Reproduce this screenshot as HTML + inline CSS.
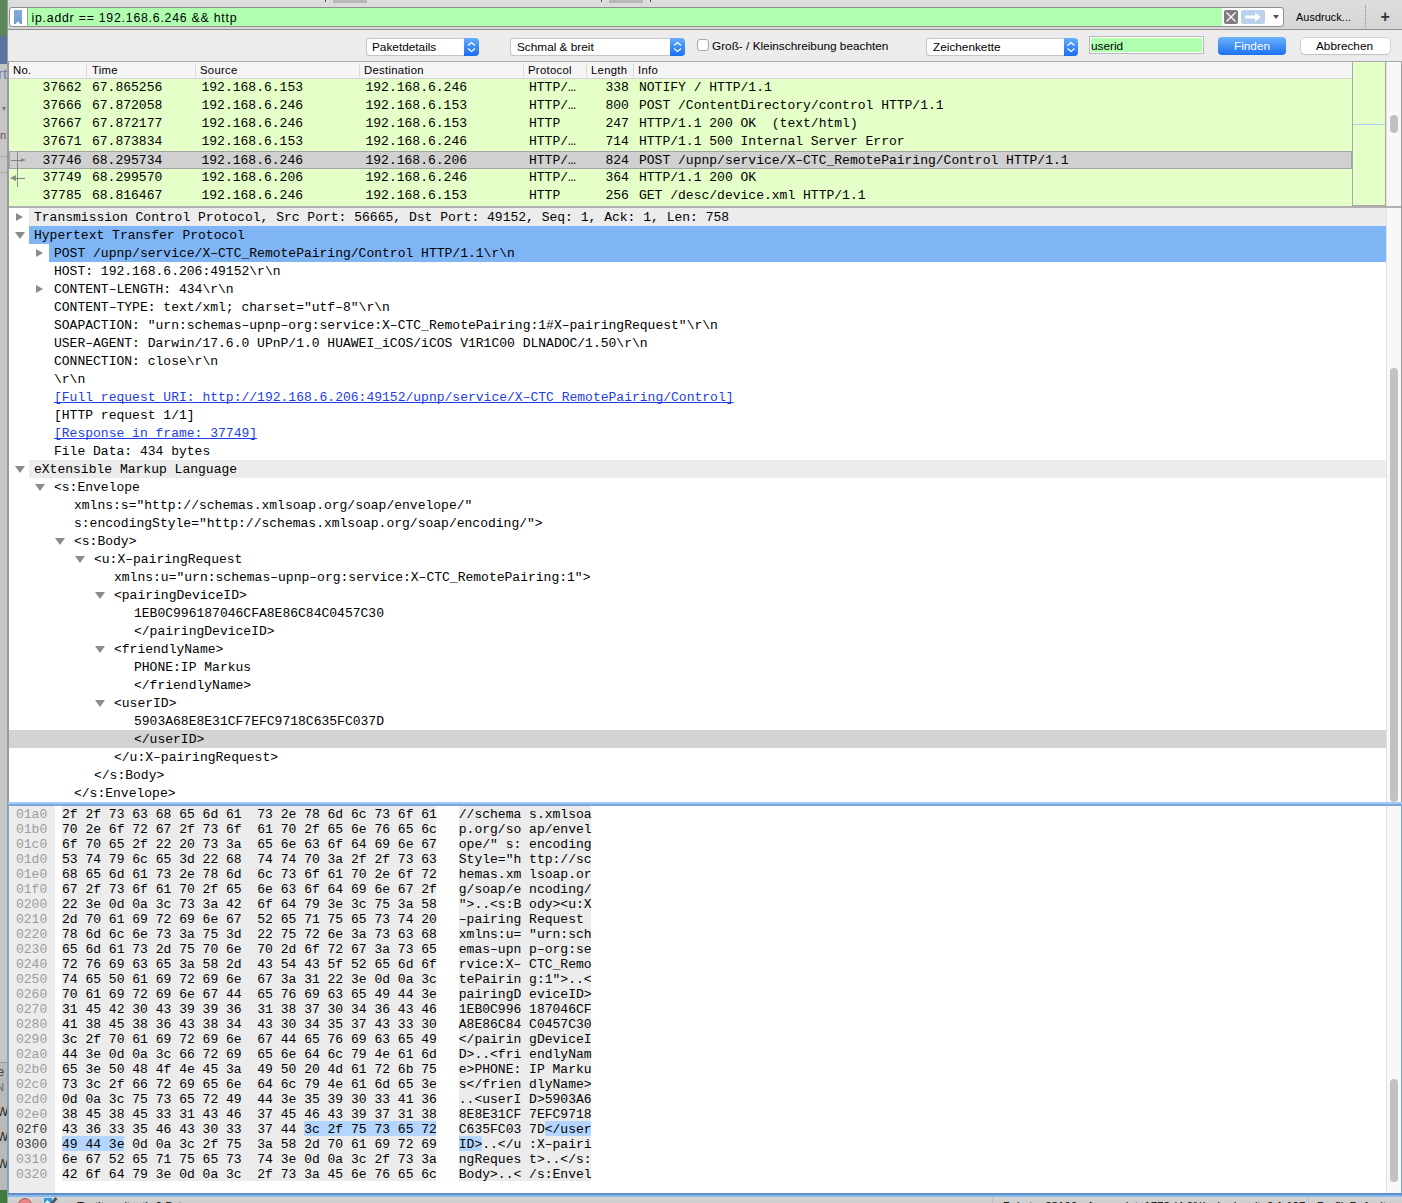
<!DOCTYPE html><html><head><meta charset="utf-8"><style>
html,body{margin:0;padding:0}
body{width:1402px;height:1203px;position:relative;overflow:hidden;background:#bdbdbd;font-family:"Liberation Sans", sans-serif}
div,span{box-sizing:border-box}
.a{position:absolute}
.m{font-family:"Liberation Mono", monospace;font-size:13.02px;white-space:pre;color:#000}
.s{font-family:"Liberation Sans", sans-serif;white-space:pre;color:#000}
.tri{position:absolute;width:0;height:0}
</style></head><body>

<div class="a" style="left:0;top:0;width:8px;height:36px;background:#5a885a"></div>
<div class="a" style="left:0;top:36px;width:8px;height:28px;background:#5a739f"></div>
<div class="a" style="left:0;top:64px;width:8px;height:1128px;background:#c6c6c6"></div>
<div class="a" style="left:0;top:1062px;width:8px;height:130px;background:#b9b9b9"></div>
<div class="a" style="left:0;top:156px;width:7px;height:1px;background:#a9a9a9"></div>
<div class="a" style="left:0;top:172px;width:7px;height:1px;background:#a9a9a9"></div>
<div class="a" style="left:0;top:1062px;width:8px;height:1px;background:#9a9a9a"></div>
<div class="a" style="left:0;top:64px;width:7px;height:1128px;overflow:hidden"><div class="a s" style="left:-2px;top:1px;font-size:15px;line-height:18px;color:#6a7fa3">rt</div><div class="tri" style="left:2px;top:43px;border-left:2.5px solid transparent;border-right:2.5px solid transparent;border-top:4px solid #7a7a7a"></div><div class="a s" style="left:0px;top:62px;font-size:11px;line-height:18px;color:#555">n</div><div class="a s" style="left:-3px;top:1000px;font-size:13px;line-height:16px;color:#444">e</div><div class="a s" style="left:-4px;top:1016px;font-size:11px;line-height:14px;color:#5a6b8a">N</div><div class="a s" style="left:-3px;top:1041px;font-size:12px;line-height:14px;color:#222">W</div><div class="a s" style="left:-3px;top:1066px;font-size:12px;line-height:14px;color:#222">W</div><div class="a s" style="left:-3px;top:1093px;font-size:12px;line-height:14px;color:#222">W</div></div>
<div class="a" style="left:0;top:1190px;width:8px;height:13px;background:#3f7a3f"></div>
<div class="a" style="left:7px;top:0;width:2px;height:1203px;background:#9a9a9a"></div>
<div class="a" style="left:8px;top:0;width:1394px;height:29px;background:linear-gradient(#dddddd,#d6d6d6)"></div>
<div class="a" style="left:8px;top:29px;width:1394px;height:1px;background:#8f8f8f"></div>
<div class="a" style="left:333px;top:0;width:34px;height:3px;background:#b8b8b8"></div>
<div class="a" style="left:609px;top:0;width:34px;height:3px;background:#b8b8b8"></div>
<div class="a" style="left:325px;top:0;width:1px;height:2px;background:#555"></div>
<div class="a" style="left:601px;top:0;width:1px;height:2px;background:#555"></div>
<div class="a" style="left:650px;top:0;width:1px;height:2px;background:#555"></div>
<div class="a" style="left:9px;top:7px;width:1275px;height:20px;border:1px solid #8e8e8e;border-radius:3px;background:#fff;overflow:hidden"><div class="a" style="left:18px;top:0;width:1194px;height:18px;background:#afffaf"></div></div>
<div class="a" style="left:14px;top:10px;width:8px;height:14px;background:linear-gradient(#84aed9,#6e9dd0);clip-path:polygon(0 0,100% 0,100% 100%,77% 100%,50% 79%,22% 100%,0 100%)"></div>
<div class="a" style="left:27px;top:8px;width:1px;height:18px;background:#a0a0a0"></div>
<div class="a s" style="left:31.5px;top:9px;font-size:12.3px;letter-spacing:0.77px;line-height:18px">ip.addr == 192.168.6.246 &amp;&amp; http</div>
<div class="a" style="left:1224px;top:10px;width:14px;height:14px;background:#7d7d7d;border-radius:2px"></div>
<svg class="a" style="left:1224px;top:10px" width="14" height="14"><path d="M2.5 2.5L11.5 11.5M11.5 2.5L2.5 11.5" stroke="#fff" stroke-width="1.3"/></svg>
<div class="a" style="left:1241px;top:10px;width:24px;height:14px;background:#bcd2ec;border-radius:2px"></div>
<svg class="a" style="left:1241px;top:10px" width="24" height="14"><path d="M4 5.5H14V2.5L20 7L14 11.5V8.5H4Z" fill="#fff"/></svg>
<div class="tri" style="left:1272.5px;top:15px;border-left:3.5px solid transparent;border-right:3.5px solid transparent;border-top:4px solid #555"></div>
<div class="a s" style="left:1296px;top:9px;font-size:10.8px;letter-spacing:0.1px;line-height:16px">Ausdruck...</div>
<div class="a" style="left:1365px;top:5px;width:1px;height:23px;border-left:1px dotted #888"></div>
<div class="a s" style="left:1380.5px;top:7.5px;font-size:16px;font-weight:bold;line-height:18px;color:#333">+</div>
<div class="a" style="left:8px;top:30px;width:1394px;height:31px;background:#ececec"></div>
<div class="a" style="left:8px;top:61px;width:1394px;height:1px;background:#a8a8a8"></div>
<div class="a" style="left:366px;top:38px;width:113px;height:18px;border-radius:4px;background:#fff;box-shadow:inset 0 0 0 1px #c6c6c6,inset 0 -1px 0 #b4b4b4"></div>
<div class="a" style="left:464px;top:38px;width:15px;height:18px;border-radius:0 4px 4px 0;background:linear-gradient(#6aaefb,#3b8cf8 50%,#1a6ff5)"></div>
<svg class="a" style="left:464px;top:38px" width="15" height="18"><path d="M4.0 7.5L7.5 4.5L11.0 7.5M4.0 10.5L7.5 13.5L11.0 10.5" stroke="#fff" stroke-width="1.3" fill="none"/></svg>
<div class="a s" style="left:372px;top:39px;font-size:11.8px;line-height:16px">Paketdetails</div>
<div class="a" style="left:510px;top:38px;width:175px;height:18px;border-radius:4px;background:#fff;box-shadow:inset 0 0 0 1px #c6c6c6,inset 0 -1px 0 #b4b4b4"></div>
<div class="a" style="left:670px;top:38px;width:15px;height:18px;border-radius:0 4px 4px 0;background:linear-gradient(#6aaefb,#3b8cf8 50%,#1a6ff5)"></div>
<svg class="a" style="left:670px;top:38px" width="15" height="18"><path d="M4.0 7.5L7.5 4.5L11.0 7.5M4.0 10.5L7.5 13.5L11.0 10.5" stroke="#fff" stroke-width="1.3" fill="none"/></svg>
<div class="a s" style="left:517px;top:39px;font-size:11.8px;line-height:16px">Schmal &amp; breit</div>
<div class="a" style="left:926px;top:38px;width:152px;height:18px;border-radius:4px;background:#fff;box-shadow:inset 0 0 0 1px #c6c6c6,inset 0 -1px 0 #b4b4b4"></div>
<div class="a" style="left:1064px;top:38px;width:14px;height:18px;border-radius:0 4px 4px 0;background:linear-gradient(#6aaefb,#3b8cf8 50%,#1a6ff5)"></div>
<svg class="a" style="left:1064px;top:38px" width="14" height="18"><path d="M3.5 7.5L7.0 4.5L10.5 7.5M3.5 10.5L7.0 13.5L10.5 10.5" stroke="#fff" stroke-width="1.3" fill="none"/></svg>
<div class="a s" style="left:933px;top:39px;font-size:11.8px;line-height:16px">Zeichenkette</div>
<div class="a" style="left:697px;top:39px;width:12px;height:12px;border:1px solid #a9a9a9;border-radius:3px;background:#fff"></div>
<div class="a s" style="left:712px;top:38px;font-size:11.8px;line-height:16px">Groß- / Kleinschreibung beachten</div>
<div class="a" style="left:1089px;top:36px;width:115px;height:18px;border:1px solid #b8b8b8;background:#afffaf;box-shadow:inset 0 0 0 1px #fff"></div>
<div class="a s" style="left:1091px;top:38px;font-size:11.8px;line-height:16px">userid</div>
<div class="a" style="left:1218px;top:37px;width:68px;height:18px;border-radius:4px;background:linear-gradient(#6cb3fa,#1b72f5)"></div>
<div class="a s" style="left:1218px;top:38px;width:68px;text-align:center;font-size:11.8px;line-height:16px;color:#fff">Finden</div>
<div class="a" style="left:1300.5px;top:38px;width:89px;height:16px;border-radius:4px;background:#fff;box-shadow:0 0 0 0.5px #b5b5b5,0 1px 1px rgba(0,0,0,0.12)"></div>
<div class="a s" style="left:1300px;top:38px;width:89px;text-align:center;font-size:11.8px;line-height:16px">Abbrechen</div>
<div class="a" style="left:9px;top:62px;width:1343px;height:17px;background:#f5f5f5;border-bottom:1px solid #d4d4d4"></div>
<div class="a s" style="left:13px;top:63px;font-size:11.3px;letter-spacing:0.3px;line-height:14px">No.</div>
<div class="a s" style="left:92px;top:63px;font-size:11.3px;letter-spacing:0.3px;line-height:14px">Time</div>
<div class="a s" style="left:200px;top:63px;font-size:11.3px;letter-spacing:0.3px;line-height:14px">Source</div>
<div class="a s" style="left:364px;top:63px;font-size:11.3px;letter-spacing:0.3px;line-height:14px">Destination</div>
<div class="a s" style="left:528px;top:63px;font-size:11.3px;letter-spacing:0.3px;line-height:14px">Protocol</div>
<div class="a s" style="left:591px;top:63px;font-size:11.3px;letter-spacing:0.3px;line-height:14px">Length</div>
<div class="a s" style="left:638px;top:63px;font-size:11.3px;letter-spacing:0.3px;line-height:14px">Info</div>
<div class="a" style="left:86px;top:64px;width:1px;height:13px;background:#dadada"></div>
<div class="a" style="left:195px;top:64px;width:1px;height:13px;background:#dadada"></div>
<div class="a" style="left:359px;top:64px;width:1px;height:13px;background:#dadada"></div>
<div class="a" style="left:523px;top:64px;width:1px;height:13px;background:#dadada"></div>
<div class="a" style="left:586px;top:64px;width:1px;height:13px;background:#dadada"></div>
<div class="a" style="left:633px;top:64px;width:1px;height:13px;background:#dadada"></div>
<div class="a" style="left:9px;top:79px;width:1343px;height:127px;background:#e4ffc7"></div>
<div class="a" style="left:9px;top:151px;width:1343px;height:18px;background:#d0d0d0;border:1px solid #a3a3a3"></div>
<div class="a m" style="left:42.5px;top:80px;line-height:16px">37662</div>
<div class="a m" style="left:92px;top:80px;line-height:16px">67.865256</div>
<div class="a m" style="left:201.5px;top:80px;line-height:16px">192.168.6.153</div>
<div class="a m" style="left:365.5px;top:80px;line-height:16px">192.168.6.246</div>
<div class="a m" style="left:529px;top:80px;line-height:16px">HTTP/…</div>
<div class="a m" style="left:605.5px;top:80px;line-height:16px">338</div>
<div class="a m" style="left:639px;top:80px;line-height:16px">NOTIFY / HTTP/1.1</div>
<div class="a m" style="left:42.5px;top:98px;line-height:16px">37666</div>
<div class="a m" style="left:92px;top:98px;line-height:16px">67.872058</div>
<div class="a m" style="left:201.5px;top:98px;line-height:16px">192.168.6.246</div>
<div class="a m" style="left:365.5px;top:98px;line-height:16px">192.168.6.153</div>
<div class="a m" style="left:529px;top:98px;line-height:16px">HTTP/…</div>
<div class="a m" style="left:605.5px;top:98px;line-height:16px">800</div>
<div class="a m" style="left:639px;top:98px;line-height:16px">POST /ContentDirectory/control HTTP/1.1</div>
<div class="a m" style="left:42.5px;top:116px;line-height:16px">37667</div>
<div class="a m" style="left:92px;top:116px;line-height:16px">67.872177</div>
<div class="a m" style="left:201.5px;top:116px;line-height:16px">192.168.6.246</div>
<div class="a m" style="left:365.5px;top:116px;line-height:16px">192.168.6.153</div>
<div class="a m" style="left:529px;top:116px;line-height:16px">HTTP</div>
<div class="a m" style="left:605.5px;top:116px;line-height:16px">247</div>
<div class="a m" style="left:639px;top:116px;line-height:16px">HTTP/1.1 200 OK  (text/html)</div>
<div class="a m" style="left:42.5px;top:134px;line-height:16px">37671</div>
<div class="a m" style="left:92px;top:134px;line-height:16px">67.873834</div>
<div class="a m" style="left:201.5px;top:134px;line-height:16px">192.168.6.153</div>
<div class="a m" style="left:365.5px;top:134px;line-height:16px">192.168.6.246</div>
<div class="a m" style="left:529px;top:134px;line-height:16px">HTTP/…</div>
<div class="a m" style="left:605.5px;top:134px;line-height:16px">714</div>
<div class="a m" style="left:639px;top:134px;line-height:16px">HTTP/1.1 500 Internal Server Error</div>
<div class="a m" style="left:42.5px;top:153px;line-height:16px">37746</div>
<div class="a m" style="left:92px;top:153px;line-height:16px">68.295734</div>
<div class="a m" style="left:201.5px;top:153px;line-height:16px">192.168.6.246</div>
<div class="a m" style="left:365.5px;top:153px;line-height:16px">192.168.6.206</div>
<div class="a m" style="left:529px;top:153px;line-height:16px">HTTP/…</div>
<div class="a m" style="left:605.5px;top:153px;line-height:16px">824</div>
<div class="a m" style="left:639px;top:153px;line-height:16px">POST /upnp/service/X–CTC_RemotePairing/Control HTTP/1.1</div>
<div class="a m" style="left:42.5px;top:170px;line-height:16px">37749</div>
<div class="a m" style="left:92px;top:170px;line-height:16px">68.299570</div>
<div class="a m" style="left:201.5px;top:170px;line-height:16px">192.168.6.206</div>
<div class="a m" style="left:365.5px;top:170px;line-height:16px">192.168.6.246</div>
<div class="a m" style="left:529px;top:170px;line-height:16px">HTTP/…</div>
<div class="a m" style="left:605.5px;top:170px;line-height:16px">364</div>
<div class="a m" style="left:639px;top:170px;line-height:16px">HTTP/1.1 200 OK</div>
<div class="a m" style="left:42.5px;top:188px;line-height:16px">37785</div>
<div class="a m" style="left:92px;top:188px;line-height:16px">68.816467</div>
<div class="a m" style="left:201.5px;top:188px;line-height:16px">192.168.6.246</div>
<div class="a m" style="left:365.5px;top:188px;line-height:16px">192.168.6.153</div>
<div class="a m" style="left:529px;top:188px;line-height:16px">HTTP</div>
<div class="a m" style="left:605.5px;top:188px;line-height:16px">256</div>
<div class="a m" style="left:639px;top:188px;line-height:16px">GET /desc/device.xml HTTP/1.1</div>
<div class="a" style="left:17px;top:151px;width:1px;height:36px;background:#808a8a"></div>
<div class="a" style="left:11px;top:160px;width:10px;height:1px;background:#808080"></div>
<div class="tri" style="left:21px;top:158px;border-top:2.5px solid transparent;border-bottom:2.5px solid transparent;border-left:5px solid #8a8a8a"></div>
<div class="a" style="left:15px;top:178px;width:10px;height:1px;background:#808080"></div>
<div class="tri" style="left:10px;top:175px;border-top:3.5px solid transparent;border-bottom:3.5px solid transparent;border-right:6px solid #8a8a8a"></div>
<div class="a" style="left:1352px;top:62px;width:34px;height:144px;background:#e4ffc7;border:1px solid #a8a8a8;border-top:none"></div>
<div class="a" style="left:1353px;top:124px;width:32px;height:1px;background:#a9d4f5"></div>
<div class="a" style="left:1386px;top:62px;width:15px;height:144px;background:#f8f8f8;border-left:1px solid #e2e2e2"></div>
<div class="a" style="left:1390px;top:115px;width:8px;height:18px;background:#c2c2c2;border-radius:4px"></div>
<div class="a" style="left:9px;top:206px;width:1393px;height:2px;background:#b0b0b0"></div>
<div class="a" style="left:9px;top:208px;width:1377px;height:594px;background:#fff"></div>
<div class="a" style="left:1386px;top:208px;width:15px;height:594px;background:#f8f8f8;border-left:1px solid #e2e2e2"></div>
<div class="a" style="left:1390px;top:368px;width:8px;height:434px;background:#c2c2c2;border-radius:4px"></div>
<div class="a" style="left:1401px;top:62px;width:1px;height:1141px;background:#a0a0a0"></div>
<div class="a" style="left:29px;top:208px;width:1357px;height:18px;background:#ececec"></div>
<div class="tri" style="left:16px;top:213px;border-top:4.5px solid transparent;border-bottom:4.5px solid transparent;border-left:7.8px solid #8b8b8b"></div>
<div class="a m" style="left:34px;top:209px;line-height:17px;">Transmission Control Protocol, Src Port: 56665, Dst Port: 49152, Seq: 1, Ack: 1, Len: 758</div>
<div class="a" style="left:29px;top:226px;width:1357px;height:18px;background:#80b5f5"></div>
<div class="tri" style="left:15px;top:232px;border-left:5px solid transparent;border-right:5px solid transparent;border-top:7.5px solid #8b8b8b"></div>
<div class="a m" style="left:34px;top:227px;line-height:17px;">Hypertext Transfer Protocol</div>
<div class="a" style="left:49px;top:244px;width:1337px;height:18px;background:#80b5f5"></div>
<div class="tri" style="left:36px;top:249px;border-top:4.5px solid transparent;border-bottom:4.5px solid transparent;border-left:7.8px solid #8b8b8b"></div>
<div class="a m" style="left:54px;top:245px;line-height:17px;">POST /upnp/service/X–CTC_RemotePairing/Control HTTP/1.1\r\n</div>
<div class="a m" style="left:54px;top:263px;line-height:17px;">HOST: 192.168.6.206:49152\r\n</div>
<div class="tri" style="left:36px;top:285px;border-top:4.5px solid transparent;border-bottom:4.5px solid transparent;border-left:7.8px solid #8b8b8b"></div>
<div class="a m" style="left:54px;top:281px;line-height:17px;">CONTENT–LENGTH: 434\r\n</div>
<div class="a m" style="left:54px;top:299px;line-height:17px;">CONTENT–TYPE: text/xml; charset="utf–8"\r\n</div>
<div class="a m" style="left:54px;top:317px;line-height:17px;">SOAPACTION: "urn:schemas–upnp–org:service:X–CTC_RemotePairing:1#X–pairingRequest"\r\n</div>
<div class="a m" style="left:54px;top:335px;line-height:17px;">USER–AGENT: Darwin/17.6.0 UPnP/1.0 HUAWEI_iCOS/iCOS V1R1C00 DLNADOC/1.50\r\n</div>
<div class="a m" style="left:54px;top:353px;line-height:17px;">CONNECTION: close\r\n</div>
<div class="a m" style="left:54px;top:371px;line-height:17px;">\r\n</div>
<div class="a m" style="left:54px;top:389px;line-height:17px;color:#1d3ee6;text-decoration:underline;text-decoration-skip-ink:none;">[Full request URI: http://192.168.6.206:49152/upnp/service/X–CTC_RemotePairing/Control]</div>
<div class="a m" style="left:54px;top:407px;line-height:17px;">[HTTP request 1/1]</div>
<div class="a m" style="left:54px;top:425px;line-height:17px;color:#1d3ee6;text-decoration:underline;text-decoration-skip-ink:none;">[Response in frame: 37749]</div>
<div class="a m" style="left:54px;top:443px;line-height:17px;">File Data: 434 bytes</div>
<div class="a" style="left:29px;top:460px;width:1357px;height:18px;background:#ececec"></div>
<div class="tri" style="left:15px;top:466px;border-left:5px solid transparent;border-right:5px solid transparent;border-top:7.5px solid #8b8b8b"></div>
<div class="a m" style="left:34px;top:461px;line-height:17px;">eXtensible Markup Language</div>
<div class="tri" style="left:35px;top:484px;border-left:5px solid transparent;border-right:5px solid transparent;border-top:7.5px solid #8b8b8b"></div>
<div class="a m" style="left:54px;top:479px;line-height:17px;">&lt;s:Envelope</div>
<div class="a m" style="left:74px;top:497px;line-height:17px;">xmlns:s="http://schemas.xmlsoap.org/soap/envelope/"</div>
<div class="a m" style="left:74px;top:515px;line-height:17px;">s:encodingStyle="http://schemas.xmlsoap.org/soap/encoding/"&gt;</div>
<div class="tri" style="left:55px;top:538px;border-left:5px solid transparent;border-right:5px solid transparent;border-top:7.5px solid #8b8b8b"></div>
<div class="a m" style="left:74px;top:533px;line-height:17px;">&lt;s:Body&gt;</div>
<div class="tri" style="left:75px;top:556px;border-left:5px solid transparent;border-right:5px solid transparent;border-top:7.5px solid #8b8b8b"></div>
<div class="a m" style="left:94px;top:551px;line-height:17px;">&lt;u:X–pairingRequest</div>
<div class="a m" style="left:114px;top:569px;line-height:17px;">xmlns:u="urn:schemas–upnp–org:service:X–CTC_RemotePairing:1"&gt;</div>
<div class="tri" style="left:95px;top:592px;border-left:5px solid transparent;border-right:5px solid transparent;border-top:7.5px solid #8b8b8b"></div>
<div class="a m" style="left:114px;top:587px;line-height:17px;">&lt;pairingDeviceID&gt;</div>
<div class="a m" style="left:134px;top:605px;line-height:17px;">1EB0C996187046CFA8E86C84C0457C30</div>
<div class="a m" style="left:134px;top:623px;line-height:17px;">&lt;/pairingDeviceID&gt;</div>
<div class="tri" style="left:95px;top:646px;border-left:5px solid transparent;border-right:5px solid transparent;border-top:7.5px solid #8b8b8b"></div>
<div class="a m" style="left:114px;top:641px;line-height:17px;">&lt;friendlyName&gt;</div>
<div class="a m" style="left:134px;top:659px;line-height:17px;">PHONE:IP Markus</div>
<div class="a m" style="left:134px;top:677px;line-height:17px;">&lt;/friendlyName&gt;</div>
<div class="tri" style="left:95px;top:700px;border-left:5px solid transparent;border-right:5px solid transparent;border-top:7.5px solid #8b8b8b"></div>
<div class="a m" style="left:114px;top:695px;line-height:17px;">&lt;userID&gt;</div>
<div class="a m" style="left:134px;top:713px;line-height:17px;">5903A68E8E31CF7EFC9718C635FC037D</div>
<div class="a" style="left:9px;top:730px;width:1377px;height:18px;background:#d3d3d3"></div>
<div class="a m" style="left:134px;top:731px;line-height:17px;">&lt;/userID&gt;</div>
<div class="a m" style="left:114px;top:749px;line-height:17px;">&lt;/u:X–pairingRequest&gt;</div>
<div class="a m" style="left:94px;top:767px;line-height:17px;">&lt;/s:Body&gt;</div>
<div class="a m" style="left:74px;top:785px;line-height:17px;">&lt;/s:Envelope&gt;</div>
<div class="a" style="left:8px;top:802px;width:1394px;height:395px;background:#fff;border:1px solid #7aa7dc;border-top:4px solid #7aa7dc;border-bottom:4px solid #8bb9ec"></div><div class="a" style="left:8px;top:1193px;width:1394px;height:2px;background:#5f8fca"></div><div class="a" style="left:8px;top:802px;width:1394px;height:2px;background:#9fcaf8"></div>
<div class="a" style="left:9px;top:806px;width:46px;height:387px;background:#ececec"></div>
<div class="a" style="left:1386px;top:806px;width:15px;height:387px;background:#f8f8f8;border-left:1px solid #e2e2e2"></div>
<div class="a" style="left:1390px;top:1079px;width:8px;height:103px;background:#c2c2c2;border-radius:4px"></div>
<div class="a" style="left:62px;top:806px;width:374.4px;height:15px;background:#ececec"></div>
<div class="a" style="left:458.8px;top:806px;width:132.6px;height:15px;background:#ececec"></div>
<div class="a m" style="left:16px;top:807px;line-height:15px;color:#9c9c9c">01a0</div>
<div class="a m" style="left:62px;top:807px;line-height:15px">2f 2f 73 63 68 65 6d 61  73 2e 78 6d 6c 73 6f 61</div>
<div class="a m" style="left:458.8px;top:807px;line-height:15px">//schema s.xmlsoa</div>
<div class="a" style="left:62px;top:821px;width:374.4px;height:15px;background:#ececec"></div>
<div class="a" style="left:458.8px;top:821px;width:132.6px;height:15px;background:#ececec"></div>
<div class="a m" style="left:16px;top:822px;line-height:15px;color:#9c9c9c">01b0</div>
<div class="a m" style="left:62px;top:822px;line-height:15px">70 2e 6f 72 67 2f 73 6f  61 70 2f 65 6e 76 65 6c</div>
<div class="a m" style="left:458.8px;top:822px;line-height:15px">p.org/so ap/envel</div>
<div class="a" style="left:62px;top:836px;width:374.4px;height:15px;background:#ececec"></div>
<div class="a" style="left:458.8px;top:836px;width:132.6px;height:15px;background:#ececec"></div>
<div class="a m" style="left:16px;top:837px;line-height:15px;color:#9c9c9c">01c0</div>
<div class="a m" style="left:62px;top:837px;line-height:15px">6f 70 65 2f 22 20 73 3a  65 6e 63 6f 64 69 6e 67</div>
<div class="a m" style="left:458.8px;top:837px;line-height:15px">ope/" s: encoding</div>
<div class="a" style="left:62px;top:851px;width:374.4px;height:15px;background:#ececec"></div>
<div class="a" style="left:458.8px;top:851px;width:132.6px;height:15px;background:#ececec"></div>
<div class="a m" style="left:16px;top:852px;line-height:15px;color:#9c9c9c">01d0</div>
<div class="a m" style="left:62px;top:852px;line-height:15px">53 74 79 6c 65 3d 22 68  74 74 70 3a 2f 2f 73 63</div>
<div class="a m" style="left:458.8px;top:852px;line-height:15px">Style="h ttp://sc</div>
<div class="a" style="left:62px;top:866px;width:374.4px;height:15px;background:#ececec"></div>
<div class="a" style="left:458.8px;top:866px;width:132.6px;height:15px;background:#ececec"></div>
<div class="a m" style="left:16px;top:867px;line-height:15px;color:#9c9c9c">01e0</div>
<div class="a m" style="left:62px;top:867px;line-height:15px">68 65 6d 61 73 2e 78 6d  6c 73 6f 61 70 2e 6f 72</div>
<div class="a m" style="left:458.8px;top:867px;line-height:15px">hemas.xm lsoap.or</div>
<div class="a" style="left:62px;top:881px;width:374.4px;height:15px;background:#ececec"></div>
<div class="a" style="left:458.8px;top:881px;width:132.6px;height:15px;background:#ececec"></div>
<div class="a m" style="left:16px;top:882px;line-height:15px;color:#9c9c9c">01f0</div>
<div class="a m" style="left:62px;top:882px;line-height:15px">67 2f 73 6f 61 70 2f 65  6e 63 6f 64 69 6e 67 2f</div>
<div class="a m" style="left:458.8px;top:882px;line-height:15px">g/soap/e ncoding/</div>
<div class="a" style="left:62px;top:896px;width:374.4px;height:15px;background:#ececec"></div>
<div class="a" style="left:458.8px;top:896px;width:132.6px;height:15px;background:#ececec"></div>
<div class="a m" style="left:16px;top:897px;line-height:15px;color:#9c9c9c">0200</div>
<div class="a m" style="left:62px;top:897px;line-height:15px">22 3e 0d 0a 3c 73 3a 42  6f 64 79 3e 3c 75 3a 58</div>
<div class="a m" style="left:458.8px;top:897px;line-height:15px">"&gt;..&lt;s:B ody&gt;&lt;u:X</div>
<div class="a" style="left:62px;top:911px;width:374.4px;height:15px;background:#ececec"></div>
<div class="a" style="left:458.8px;top:911px;width:132.6px;height:15px;background:#ececec"></div>
<div class="a m" style="left:16px;top:912px;line-height:15px;color:#9c9c9c">0210</div>
<div class="a m" style="left:62px;top:912px;line-height:15px">2d 70 61 69 72 69 6e 67  52 65 71 75 65 73 74 20</div>
<div class="a m" style="left:458.8px;top:912px;line-height:15px">–pairing Request </div>
<div class="a" style="left:62px;top:926px;width:374.4px;height:15px;background:#ececec"></div>
<div class="a" style="left:458.8px;top:926px;width:132.6px;height:15px;background:#ececec"></div>
<div class="a m" style="left:16px;top:927px;line-height:15px;color:#9c9c9c">0220</div>
<div class="a m" style="left:62px;top:927px;line-height:15px">78 6d 6c 6e 73 3a 75 3d  22 75 72 6e 3a 73 63 68</div>
<div class="a m" style="left:458.8px;top:927px;line-height:15px">xmlns:u= "urn:sch</div>
<div class="a" style="left:62px;top:941px;width:374.4px;height:15px;background:#ececec"></div>
<div class="a" style="left:458.8px;top:941px;width:132.6px;height:15px;background:#ececec"></div>
<div class="a m" style="left:16px;top:942px;line-height:15px;color:#9c9c9c">0230</div>
<div class="a m" style="left:62px;top:942px;line-height:15px">65 6d 61 73 2d 75 70 6e  70 2d 6f 72 67 3a 73 65</div>
<div class="a m" style="left:458.8px;top:942px;line-height:15px">emas–upn p–org:se</div>
<div class="a" style="left:62px;top:956px;width:374.4px;height:15px;background:#ececec"></div>
<div class="a" style="left:458.8px;top:956px;width:132.6px;height:15px;background:#ececec"></div>
<div class="a m" style="left:16px;top:957px;line-height:15px;color:#9c9c9c">0240</div>
<div class="a m" style="left:62px;top:957px;line-height:15px">72 76 69 63 65 3a 58 2d  43 54 43 5f 52 65 6d 6f</div>
<div class="a m" style="left:458.8px;top:957px;line-height:15px">rvice:X– CTC_Remo</div>
<div class="a" style="left:62px;top:971px;width:374.4px;height:15px;background:#ececec"></div>
<div class="a" style="left:458.8px;top:971px;width:132.6px;height:15px;background:#ececec"></div>
<div class="a m" style="left:16px;top:972px;line-height:15px;color:#9c9c9c">0250</div>
<div class="a m" style="left:62px;top:972px;line-height:15px">74 65 50 61 69 72 69 6e  67 3a 31 22 3e 0d 0a 3c</div>
<div class="a m" style="left:458.8px;top:972px;line-height:15px">tePairin g:1"&gt;..&lt;</div>
<div class="a" style="left:62px;top:986px;width:374.4px;height:15px;background:#ececec"></div>
<div class="a" style="left:458.8px;top:986px;width:132.6px;height:15px;background:#ececec"></div>
<div class="a m" style="left:16px;top:987px;line-height:15px;color:#9c9c9c">0260</div>
<div class="a m" style="left:62px;top:987px;line-height:15px">70 61 69 72 69 6e 67 44  65 76 69 63 65 49 44 3e</div>
<div class="a m" style="left:458.8px;top:987px;line-height:15px">pairingD eviceID&gt;</div>
<div class="a" style="left:62px;top:1001px;width:374.4px;height:15px;background:#ececec"></div>
<div class="a" style="left:458.8px;top:1001px;width:132.6px;height:15px;background:#ececec"></div>
<div class="a m" style="left:16px;top:1002px;line-height:15px;color:#9c9c9c">0270</div>
<div class="a m" style="left:62px;top:1002px;line-height:15px">31 45 42 30 43 39 39 36  31 38 37 30 34 36 43 46</div>
<div class="a m" style="left:458.8px;top:1002px;line-height:15px">1EB0C996 187046CF</div>
<div class="a" style="left:62px;top:1016px;width:374.4px;height:15px;background:#ececec"></div>
<div class="a" style="left:458.8px;top:1016px;width:132.6px;height:15px;background:#ececec"></div>
<div class="a m" style="left:16px;top:1017px;line-height:15px;color:#9c9c9c">0280</div>
<div class="a m" style="left:62px;top:1017px;line-height:15px">41 38 45 38 36 43 38 34  43 30 34 35 37 43 33 30</div>
<div class="a m" style="left:458.8px;top:1017px;line-height:15px">A8E86C84 C0457C30</div>
<div class="a" style="left:62px;top:1031px;width:374.4px;height:15px;background:#ececec"></div>
<div class="a" style="left:458.8px;top:1031px;width:132.6px;height:15px;background:#ececec"></div>
<div class="a m" style="left:16px;top:1032px;line-height:15px;color:#9c9c9c">0290</div>
<div class="a m" style="left:62px;top:1032px;line-height:15px">3c 2f 70 61 69 72 69 6e  67 44 65 76 69 63 65 49</div>
<div class="a m" style="left:458.8px;top:1032px;line-height:15px">&lt;/pairin gDeviceI</div>
<div class="a" style="left:62px;top:1046px;width:374.4px;height:15px;background:#ececec"></div>
<div class="a" style="left:458.8px;top:1046px;width:132.6px;height:15px;background:#ececec"></div>
<div class="a m" style="left:16px;top:1047px;line-height:15px;color:#9c9c9c">02a0</div>
<div class="a m" style="left:62px;top:1047px;line-height:15px">44 3e 0d 0a 3c 66 72 69  65 6e 64 6c 79 4e 61 6d</div>
<div class="a m" style="left:458.8px;top:1047px;line-height:15px">D&gt;..&lt;fri endlyNam</div>
<div class="a" style="left:62px;top:1061px;width:374.4px;height:15px;background:#ececec"></div>
<div class="a" style="left:458.8px;top:1061px;width:132.6px;height:15px;background:#ececec"></div>
<div class="a m" style="left:16px;top:1062px;line-height:15px;color:#9c9c9c">02b0</div>
<div class="a m" style="left:62px;top:1062px;line-height:15px">65 3e 50 48 4f 4e 45 3a  49 50 20 4d 61 72 6b 75</div>
<div class="a m" style="left:458.8px;top:1062px;line-height:15px">e&gt;PHONE: IP Marku</div>
<div class="a" style="left:62px;top:1076px;width:374.4px;height:15px;background:#ececec"></div>
<div class="a" style="left:458.8px;top:1076px;width:132.6px;height:15px;background:#ececec"></div>
<div class="a m" style="left:16px;top:1077px;line-height:15px;color:#9c9c9c">02c0</div>
<div class="a m" style="left:62px;top:1077px;line-height:15px">73 3c 2f 66 72 69 65 6e  64 6c 79 4e 61 6d 65 3e</div>
<div class="a m" style="left:458.8px;top:1077px;line-height:15px">s&lt;/frien dlyName&gt;</div>
<div class="a" style="left:62px;top:1091px;width:374.4px;height:15px;background:#ececec"></div>
<div class="a" style="left:458.8px;top:1091px;width:132.6px;height:15px;background:#ececec"></div>
<div class="a m" style="left:16px;top:1092px;line-height:15px;color:#9c9c9c">02d0</div>
<div class="a m" style="left:62px;top:1092px;line-height:15px">0d 0a 3c 75 73 65 72 49  44 3e 35 39 30 33 41 36</div>
<div class="a m" style="left:458.8px;top:1092px;line-height:15px">..&lt;userI D&gt;5903A6</div>
<div class="a" style="left:62px;top:1106px;width:374.4px;height:15px;background:#ececec"></div>
<div class="a" style="left:458.8px;top:1106px;width:132.6px;height:15px;background:#ececec"></div>
<div class="a m" style="left:16px;top:1107px;line-height:15px;color:#9c9c9c">02e0</div>
<div class="a m" style="left:62px;top:1107px;line-height:15px">38 45 38 45 33 31 43 46  37 45 46 43 39 37 31 38</div>
<div class="a m" style="left:458.8px;top:1107px;line-height:15px">8E8E31CF 7EFC9718</div>
<div class="a" style="left:62px;top:1121px;width:374.4px;height:15px;background:#ececec"></div>
<div class="a" style="left:458.8px;top:1121px;width:132.6px;height:15px;background:#ececec"></div>
<div class="a" style="left:303.79999999999995px;top:1121px;width:132.6px;height:15px;background:#b4d5fe"></div>
<div class="a" style="left:544.6px;top:1121px;width:46.8px;height:15px;background:#b4d5fe"></div>
<div class="a m" style="left:16px;top:1122px;line-height:15px;color:#3a3a3a">02f0</div>
<div class="a m" style="left:62px;top:1122px;line-height:15px">43 36 33 35 46 43 30 33  37 44 3c 2f 75 73 65 72</div>
<div class="a m" style="left:458.8px;top:1122px;line-height:15px">C635FC03 7D&lt;/user</div>
<div class="a" style="left:62px;top:1136px;width:374.4px;height:15px;background:#ececec"></div>
<div class="a" style="left:458.8px;top:1136px;width:132.6px;height:15px;background:#ececec"></div>
<div class="a" style="left:62px;top:1136px;width:62.4px;height:15px;background:#b4d5fe"></div>
<div class="a" style="left:458.8px;top:1136px;width:23.4px;height:15px;background:#b4d5fe"></div>
<div class="a m" style="left:16px;top:1137px;line-height:15px;color:#3a3a3a">0300</div>
<div class="a m" style="left:62px;top:1137px;line-height:15px">49 44 3e 0d 0a 3c 2f 75  3a 58 2d 70 61 69 72 69</div>
<div class="a m" style="left:458.8px;top:1137px;line-height:15px">ID&gt;..&lt;/u :X–pairi</div>
<div class="a" style="left:62px;top:1151px;width:374.4px;height:15px;background:#ececec"></div>
<div class="a" style="left:458.8px;top:1151px;width:132.6px;height:15px;background:#ececec"></div>
<div class="a m" style="left:16px;top:1152px;line-height:15px;color:#9c9c9c">0310</div>
<div class="a m" style="left:62px;top:1152px;line-height:15px">6e 67 52 65 71 75 65 73  74 3e 0d 0a 3c 2f 73 3a</div>
<div class="a m" style="left:458.8px;top:1152px;line-height:15px">ngReques t&gt;..&lt;/s:</div>
<div class="a" style="left:62px;top:1166px;width:374.4px;height:15px;background:#ececec"></div>
<div class="a" style="left:458.8px;top:1166px;width:132.6px;height:15px;background:#ececec"></div>
<div class="a m" style="left:16px;top:1167px;line-height:15px;color:#9c9c9c">0320</div>
<div class="a m" style="left:62px;top:1167px;line-height:15px">42 6f 64 79 3e 0d 0a 3c  2f 73 3a 45 6e 76 65 6c</div>
<div class="a m" style="left:458.8px;top:1167px;line-height:15px">Body&gt;..&lt; /s:Envel</div>
<div class="a" style="left:8px;top:1197px;width:1394px;height:6px;background:linear-gradient(#d6d6d6,#cdcdcd)"></div>
<div class="a" style="left:18px;top:1198px;width:14px;height:14px;border-radius:50%;background:#eb8585;border:1px solid #a85050"></div>
<div class="a" style="left:44px;top:1198px;width:8px;height:5px;background:#2f9ad8"></div><div class="a" style="left:45px;top:1200px;width:5px;height:3px;background:#f4f4f4;clip-path:polygon(50% 0,100% 100%,0 100%)"></div>
<div class="a" style="left:52px;top:1197px;width:3px;height:9px;background:#555;transform:rotate(40deg)"></div>
<div class="a s" style="left:77px;top:1199px;font-size:11.5px;line-height:14px">Textitem (text), 0 Bytes</div>
<div class="a" style="left:992px;top:1196px;width:1px;height:7px;background:#bdbdbd"></div>
<div class="a s" style="left:1003px;top:1199px;font-size:11.5px;line-height:14px">Pakete: 38196 · Angezeigt: 1773 (4.6%) · Ladezeit: 0:1.197</div>
<div class="a" style="left:1308px;top:1196px;width:1px;height:7px;background:#bdbdbd"></div>
<div class="a s" style="left:1317px;top:1199px;font-size:11.5px;line-height:14px">Profil: Default</div>
</body></html>
